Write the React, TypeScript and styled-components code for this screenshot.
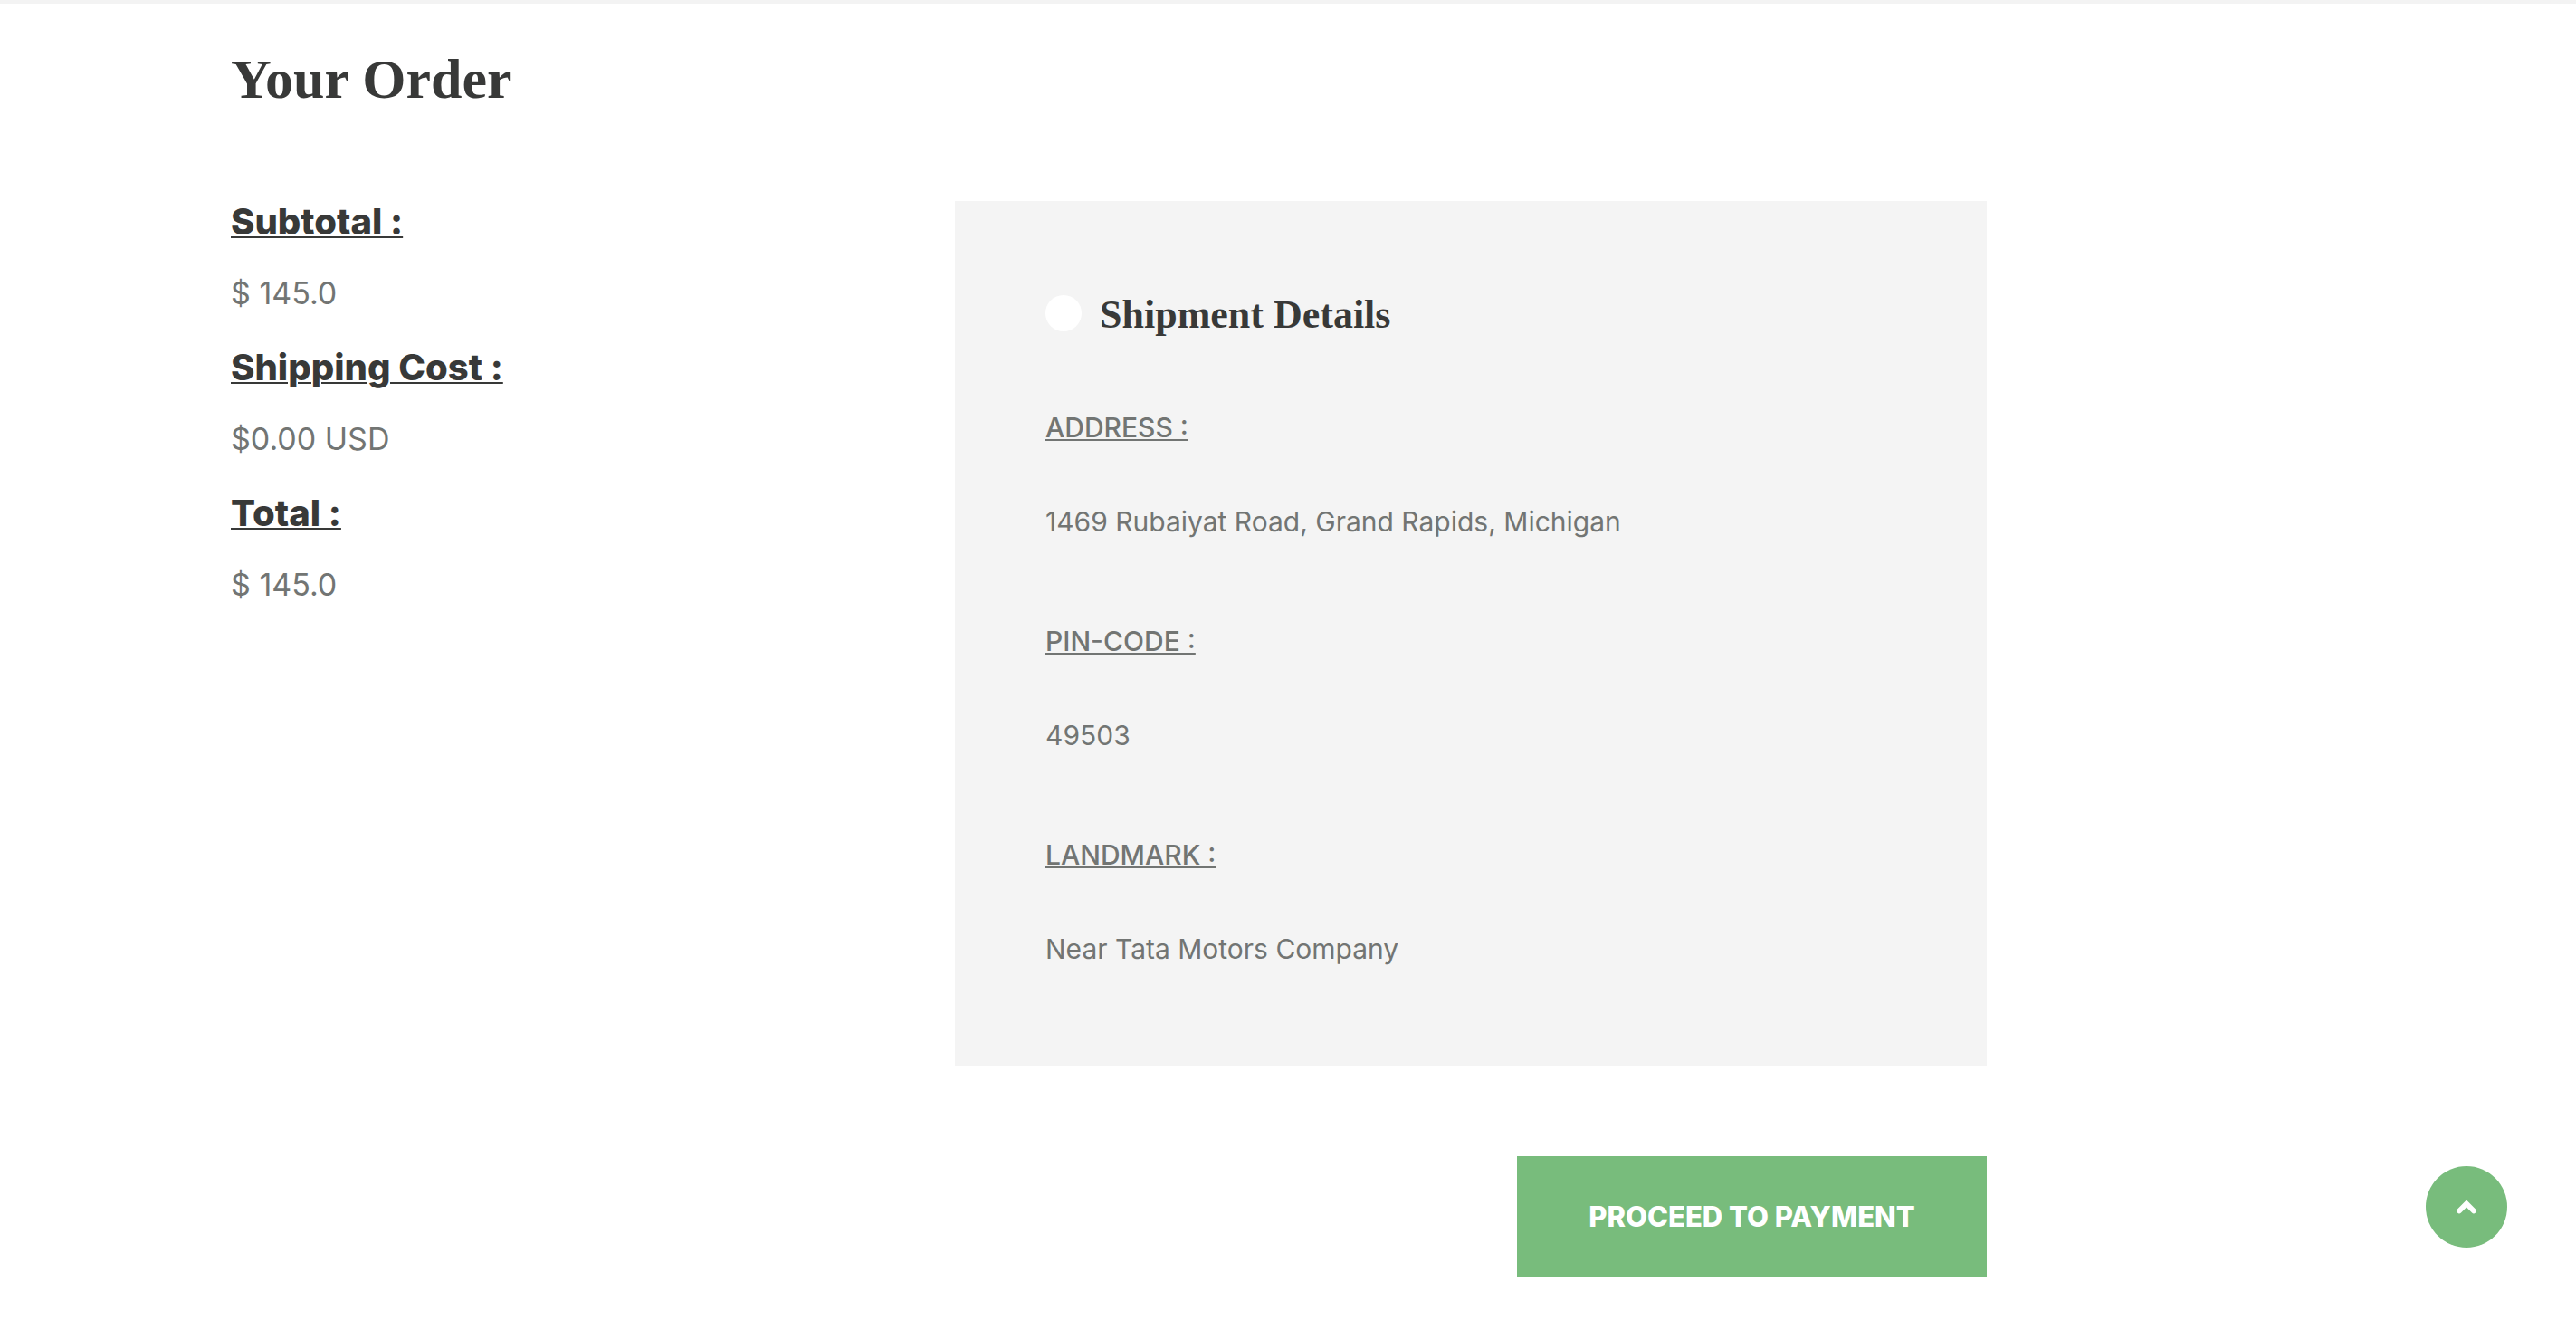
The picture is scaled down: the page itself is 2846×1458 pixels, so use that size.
import React from "react";
import styled, { createGlobalStyle } from "styled-components";

const GlobalStyle = createGlobalStyle`
  *, *::before, *::after {
    box-sizing: border-box;
  }
  body {
    margin: 0;
    background: #ffffff;
    color: #727573;
    font-family: Inter, "Liberation Sans", sans-serif;
  }
  h1, h2, dl, dt, dd {
    margin: 0;
  }
`;

const serif = `"Liberation Serif", serif`;
const ink = "#383938";
const green = "#78bc7c";

const Page = styled.main`
  border-top: 4px solid #f3f3f3;
`;

const Container = styled.div`
  max-width: 2400px;
  margin: 0 auto;
  padding: 47px 28px 46px 32px;
`;

const Title = styled.h1`
  color: ${ink};
  font: 700 62px/72px ${serif};
`;

const Columns = styled.div`
  display: grid;
  grid-template-columns: repeat(12, minmax(0, 1fr));
  column-gap: 60px;
  align-items: start;
  margin-top: 99px;
`;

const Totals = styled.dl`
  grid-column: span 4;
  display: flex;
  flex-direction: column;
  gap: 27px;
`;

const Total = styled.div`
  display: grid;
  gap: 24px;
`;

const TotalLabel = styled.dt`
  color: ${ink};
  font-size: 40px;
  font-weight: 800;
  line-height: 46px;
  text-decoration: underline;
  text-decoration-thickness: 2px;
  text-underline-offset: 2px;
`;

const TotalValue = styled.dd`
  font-size: 34px;
  font-weight: 400;
  line-height: 64px;
`;

const Checkout = styled.form`
  grid-column: span 6;
  display: flex;
  flex-direction: column;
  align-items: flex-end;
  gap: 100px;
`;

const Shipment = styled.section`
  width: 100%;
  padding: 100px;
  background: #f4f4f4;
`;

const ShipmentHeader = styled.div`
  display: flex;
  align-items: flex-start;
  gap: 20px;
`;

const Radio = styled.input`
  appearance: none;
  width: 40px;
  height: 40px;
  margin: 4px 0 0;
  border-radius: 50%;
  background: #ffffff;
  cursor: pointer;

  &:checked {
    border: 10px solid #ffffff;
    background: ${green};
  }
`;

const ShipmentTitle = styled.h2`
  color: ${ink};
  font: 700 44px/52px ${serif};
`;

const Fields = styled.dl`
  display: flex;
  flex-direction: column;
  gap: 74px;
  margin-top: 69px;
`;

const Field = styled.div`
  display: grid;
  gap: 46px;
`;

const FieldLabel = styled.dt`
  font-size: 30px;
  font-weight: 500;
  line-height: 58px;
  text-transform: uppercase;
  text-decoration: underline;
  text-decoration-thickness: 2px;
  text-underline-offset: 2px;
`;

const FieldValue = styled.dd`
  font-size: 30px;
  font-weight: 400;
  line-height: 58px;
`;

const PayButton = styled.button`
  min-width: 519px;
  height: 134px;
  padding: 0 40px;
  border: 0;
  background: ${green};
  color: #ffffff;
  font: 800 31px/58px Inter, "Liberation Sans", sans-serif;
  text-transform: uppercase;
  cursor: pointer;
`;

const ScrollTop = styled.button`
  position: fixed;
  right: 76px;
  bottom: 80px;
  display: grid;
  place-items: center;
  width: 90px;
  height: 90px;
  padding: 0;
  border: 0;
  border-radius: 50%;
  background: ${green};
  color: #ffffff;
  cursor: pointer;
`;

const totals = [
  { label: "Subtotal :", value: "$ 145.0" },
  { label: "Shipping Cost :", value: "$0.00 USD" },
  { label: "Total :", value: "$ 145.0" },
];

const fields = [
  { label: "Address :", value: "1469 Rubaiyat Road, Grand Rapids, Michigan" },
  { label: "Pin-code :", value: "49503" },
  { label: "Landmark :", value: "Near Tata Motors Company" },
];

export default function App() {
  return (
    <>
      <GlobalStyle />
      <Page>
        <Container>
          <Title>Your Order</Title>
          <Columns>
            <Totals>
              {totals.map((t) => (
                <Total key={t.label}>
                  <TotalLabel>{t.label}</TotalLabel>
                  <TotalValue>{t.value}</TotalValue>
                </Total>
              ))}
            </Totals>
            <Checkout onSubmit={(e) => e.preventDefault()}>
              <Shipment>
                <ShipmentHeader>
                  <Radio type="radio" id="shipment" name="shipment" />
                  <ShipmentTitle>
                    <label htmlFor="shipment">Shipment Details</label>
                  </ShipmentTitle>
                </ShipmentHeader>
                <Fields>
                  {fields.map((f) => (
                    <Field key={f.label}>
                      <FieldLabel>{f.label}</FieldLabel>
                      <FieldValue>{f.value}</FieldValue>
                    </Field>
                  ))}
                </Fields>
              </Shipment>
              <PayButton type="submit">Proceed to Payment</PayButton>
            </Checkout>
          </Columns>
        </Container>
      </Page>
      <ScrollTop
        type="button"
        aria-label="Back to top"
        onClick={() => window.scrollTo({ top: 0, behavior: "smooth" })}
      >
        <svg width="24" height="16" viewBox="0 0 24 16" fill="none" aria-hidden="true">
          <path
            d="M4 12.5 12 4.5 20 12.5"
            stroke="currentColor"
            strokeWidth="5.6"
            strokeLinecap="round"
            strokeLinejoin="miter"
          />
        </svg>
      </ScrollTop>
    </>
  );
}
